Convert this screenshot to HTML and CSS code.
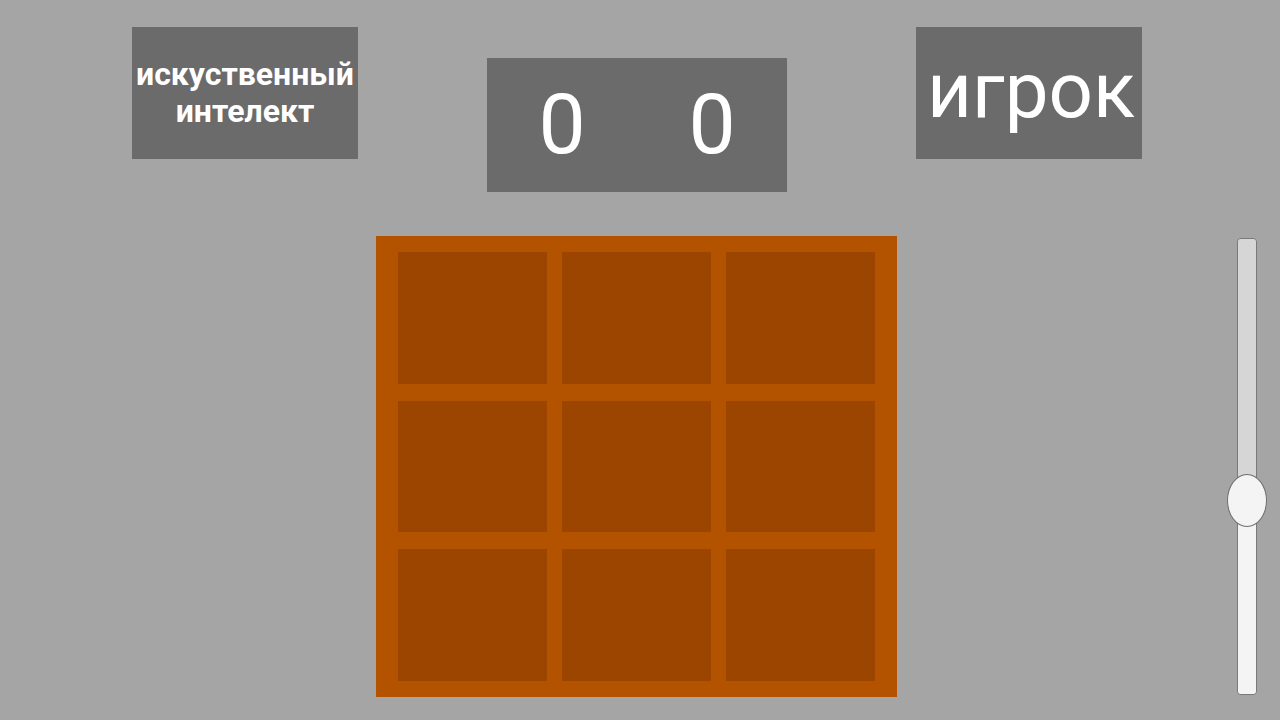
FILE: index.html
```html
<!DOCTYPE html>
<html lang="ru">
<head>
<meta charset="utf-8">
<title>Крестики-нолики</title>
<link rel="stylesheet" href="styles.css">
</head>
<body>
<div class="page">
  <div class="top-row">
    <div class="panel panel-ai"><span class="ai-label">искуственный<br>интелект</span></div>
    <div class="score">
      <span class="score-num">0</span>
      <span class="score-num">0</span>
    </div>
    <div class="panel panel-player"><span class="player-label">игрок</span></div>
  </div>
  <div class="main-row">
    <div class="board">
      <div class="cell"></div><div class="cell"></div><div class="cell"></div>
      <div class="cell"></div><div class="cell"></div><div class="cell"></div>
      <div class="cell"></div><div class="cell"></div><div class="cell"></div>
    </div>
    <div class="slider">
      <div class="track-top"></div>
      <div class="track-fill"></div>
      <div class="handle"></div>
    </div>
  </div>
</div>
</body>
</html>
```
FILE: styles.css
```css
* { box-sizing: border-box; }
html, body {
  margin: 0;
  padding: 0;
  width: 1280px;
  height: 720px;
  overflow: hidden;
  background: #a5a5a5;
  font-family: Roboto, "Noto Sans", sans-serif;
  color: #ffffff;
}
.page {
  width: 1280px;
  height: 720px;
}
.top-row {
  display: flex;
  align-items: flex-start;
  padding-left: 132px;
  gap: 129px;
  height: 192px;
}
.panel {
  width: 226px;
  height: 132px;
  margin-top: 27px;
  background: #6b6b6b;
  display: flex;
  align-items: center;
  justify-content: center;
  text-align: center;
}
.ai-label {
  font-weight: 700;
  font-size: 32px;
  line-height: 37px;
}
.player-label {
  font-size: 78px;
  line-height: 1;
  padding-bottom: 4px;
  padding-left: 4px;
}
.score {
  width: 300px;
  height: 134px;
  margin-top: 58px;
  background: #6b6b6b;
  display: flex;
  align-items: center;
}
.score-num {
  flex: 1;
  text-align: center;
  font-size: 84px;
  line-height: 1;
}
.main-row {
  display: flex;
  align-items: flex-start;
  margin-top: 44px;
  padding-left: 376px;
  padding-right: 23px;
}
.board {
  width: 521px;
  height: 461px;
  background: #b35300;
  padding: 16px 22px;
  display: grid;
  grid-template-columns: repeat(3, 149px);
  grid-template-rows: 132px 131px 132px;
  column-gap: 15px;
  row-gap: 17px;
}
.cell {
  background: #9c4500;
}
.slider {
  position: relative;
  margin-left: auto;
  margin-top: 2px;
  width: 20px;
  height: 457px;
  border: 1px solid #7a7a7a;
  border-radius: 4px;
  display: flex;
  flex-direction: column;
}
.track-top {
  height: 262px;
  background: #d6d6d6;
  border-radius: 3px 3px 0 0;
}
.track-fill {
  flex: 1;
  background: #f4f4f4;
  border-radius: 0 0 3px 3px;
}
.handle {
  position: absolute;
  left: -11px;
  top: 235px;
  width: 40px;
  height: 53px;
  border-radius: 50%;
  background: #f4f4f4;
  border: 1px solid #6e6e6e;
}
```
